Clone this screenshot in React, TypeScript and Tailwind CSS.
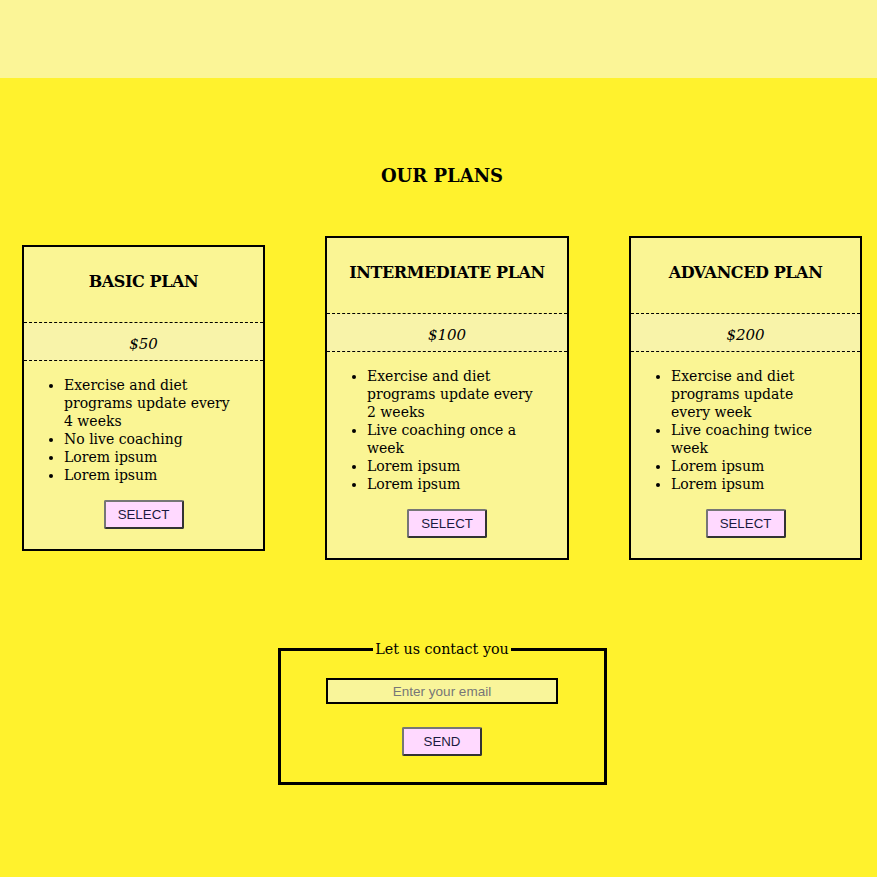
import React from "react";

const serif = { fontFamily: '"DejaVu Serif", "Liberation Serif", serif' };
const sans = { fontFamily: '"Liberation Sans", Arial, sans-serif' };

type Plan = { title: string; price: string; items: string[] };

const plans: Plan[] = [
  {
    title: "BASIC PLAN",
    price: "$50",
    items: ["Exercise and diet programs update every 4 weeks", "No live coaching", "Lorem ipsum", "Lorem ipsum"],
  },
  {
    title: "INTERMEDIATE PLAN",
    price: "$100",
    items: ["Exercise and diet programs update every 2 weeks", "Live coaching once a week", "Lorem ipsum", "Lorem ipsum"],
  },
  {
    title: "ADVANCED PLAN",
    price: "$200",
    items: ["Exercise and diet programs update every week", "Live coaching twice week", "Lorem ipsum", "Lorem ipsum"],
  },
];

const widths = ["w-[243px]", "w-[244px]", "w-[233px]"];

function Card({ plan, w }: { plan: Plan; w: string }) {
  return (
    <div className={`${w} shrink-0 border-2 border-black bg-[#faf594] flex flex-col`}>
      <div className="h-[76px] pb-[6px] flex items-center justify-center border-b border-dashed border-black">
        <h3 className="text-[16px] font-bold tracking-[-0.4px] text-black">{plan.title}</h3>
      </div>
      <div className="h-[38px] pt-[5px] flex items-center justify-center border-b border-dashed border-black bg-[#f8f3a9]">
        <span className="italic text-[15px] text-black">{plan.price}</span>
      </div>
      <ul className="list-disc pl-[40px] pr-[26px] mt-[15px] text-[14px] leading-[18px] text-black">
        {plan.items.map((it, i) => (
          <li key={i}>{it}</li>
        ))}
      </ul>
      <div className="flex justify-center mt-[16px] mb-[20px]">
        <button
          className="w-[80px] h-[29px] bg-[#ffd9ff] border-2 border-t-[#767676] border-l-[#767676] border-b-[#333] border-r-[#333] rounded-[2px] text-[13.3px] text-[#1a1a40]"
          style={sans}
        >
          SELECT
        </button>
      </div>
    </div>
  );
}

export default function App() {
  return (
    <div className="min-h-[877px] w-full bg-[#fff22d] overflow-hidden" style={serif}>
      <div className="h-[78px] bg-[#fbf597]" />
      <div className="flex flex-col items-center pl-[7px]">
        <h2 className="mt-[86px] text-[18px] font-bold leading-[24px] text-black">OUR PLANS</h2>
        <div className="mt-[48px] flex items-center gap-[60px]">
          {plans.map((p, i) => (
            <Card key={i} plan={p} w={widths[i]} />
          ))}
        </div>
        <fieldset className="mt-[80px] w-[329px] h-[145px] border-[3px] border-black flex flex-col items-center">
          <legend className="mx-auto px-[2px] text-[14.3px] leading-[18px] text-black">Let us contact you</legend>
          <input
            placeholder="Enter your email"
            className="mt-[20px] w-[232px] h-[26px] border-2 border-black bg-[#f9f59a] text-center text-[13.5px] placeholder:text-[#777] outline-none"
            style={sans}
          />
          <button
            className="mt-[23px] w-[80px] h-[29px] bg-[#ffd9ff] border-2 border-t-[#767676] border-l-[#767676] border-b-[#333] border-r-[#333] rounded-[2px] text-[13.3px] text-[#1a1a40]"
            style={sans}
          >
            SEND
          </button>
        </fieldset>
      </div>
    </div>
  );
}
